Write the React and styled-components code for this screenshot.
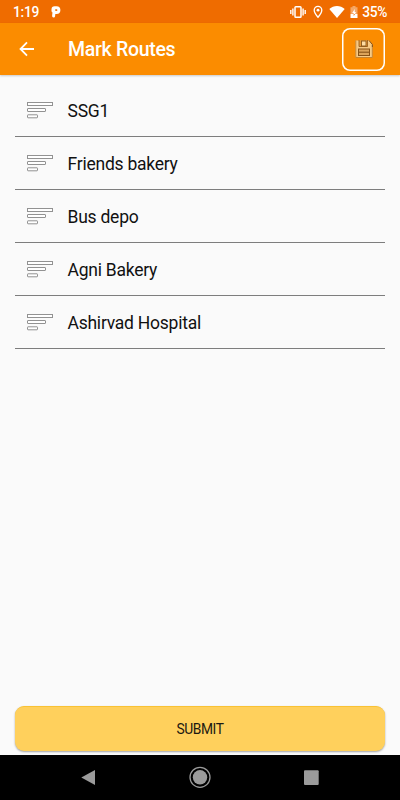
import React from 'react';
import styled, { createGlobalStyle } from 'styled-components';

const routes = [
  { id: 1, name: 'SSG1' },
  { id: 2, name: 'Friends bakery' },
  { id: 3, name: 'Bus depo' },
  { id: 4, name: 'Agni Bakery' },
  { id: 5, name: 'Ashirvad Hospital' },
];

function App() {
  return (
    <>
      <GlobalStyle />
      <Screen>
        <StatusBar>
          <Clock>1:19</Clock>
          <ParkingIcon />
          <StatusIcons>
            <VibrateIcon />
            <PinIcon />
            <WifiIcon />
            <BatteryIcon />
            <Percent>35%</Percent>
          </StatusIcons>
        </StatusBar>
        <AppBar>
          <BackButton aria-label="Back">
            <BackIcon />
          </BackButton>
          <Title>Mark Routes</Title>
          <SaveButton aria-label="Save">
            <SaveIcon />
          </SaveButton>
        </AppBar>
        <RouteList>
          {routes.map(({ id, name }) => (
            <RouteItem key={id}>
              <HandleIcon />
              <RouteName>{name}</RouteName>
            </RouteItem>
          ))}
        </RouteList>
        <Footer>
          <SubmitButton>SUBMIT</SubmitButton>
        </Footer>
        <NavBar>
          <NavIcons />
        </NavBar>
      </Screen>
    </>
  );
}

const ParkingIcon = () => (
  <svg width="12" height="14" viewBox="0 0 12 14">
    <path
      d="M3 6V4.500C3 3.100 3.600 2.700 4.600 2.700H6.500a2.300 2.300 0 0 1 0 4.800H5M4.200 5.500 3.600 11"
      fill="none"
      stroke="#fff"
      strokeWidth="3"
      strokeLinecap="round"
      strokeLinejoin="round"
    />
    <path d="M6 4.300 5.700 6" stroke="#ef8a3a" strokeWidth=".9" />
  </svg>
);

const VibrateIcon = () => (
  <svg width="16" height="14" viewBox="0 0 16 14">
    <path d="M.8 5v4M2.900 3.500v7M13.100 3.500v7M15.200 5v4" stroke="#fff" strokeWidth="1.400" />
    <rect x="5" y="1.800" width="6" height="10.400" rx=".8" fill="none" stroke="#fff" strokeWidth="1.500" />
  </svg>
);

const PinIcon = () => (
  <svg width="10" height="14" viewBox="0 0 10 14">
    <path
      d="M5 1.300a3.800 3.800 0 0 0-3.800 3.800C1.200 8 5 12.300 5 12.300s3.800-4.300 3.800-7.200A3.800 3.800 0 0 0 5 1.300z"
      fill="none"
      stroke="#fff"
      strokeWidth="1.300"
    />
    <circle cx="5" cy="5.200" r="1.400" fill="#fff" />
  </svg>
);

const WifiIcon = () => (
  <svg width="16" height="14" viewBox="0 0 16 14">
    <path d="M.3 4C2.500 2.100 5.200 1.100 8 1.100s5.500 1 7.700 2.900L8 13z" fill="#fff" />
  </svg>
);

const BatteryIcon = () => (
  <svg width="8" height="14" viewBox="0 0 8 14">
    <path d="M2.500 1h3v1.300H7.500V9h-7V2.300h2z" fill="#fff" fillOpacity=".4" />
    <path d="M.5 9h7v4h-7z" fill="#fff" />
    <path d="M4.700 4 2.200 8H3.700v1H5L6 7H4.700z" fill="#fff" />
    <path d="M3.700 9H5l-1.300 2z" fill="#ef6c00" />
  </svg>
);

const BackIcon = () => (
  <svg width="16" height="16" viewBox="0 0 16 16" fill="none" stroke="#fff" strokeWidth="1.800">
    <path d="M15 8H2M8 1.300 1.500 8 8 14.700" />
  </svg>
);

const SaveIcon = () => (
  <svg width="18" height="18" viewBox="0 0 18 18">
    <path d="M.5.500h13.500L17.500 4.500v13H.5z" fill="#f7ca85" />
    <path d="M.8.500v17H17.300V4.500" fill="none" stroke="#b97a2c" strokeWidth=".8" />
    <path d="M4 0h8.500v7H4z" fill="#e79a35" />
    <path d="M4 0v6.500h8.500V0" fill="none" stroke="#99601f" strokeWidth=".9" />
    <rect x="6.500" y="1" width="4.500" height="5" fill="#ffdda2" stroke="#87551a" strokeWidth=".9" />
    <path d="M14 .5 17.400 4.500v2.500" fill="none" stroke="#85521b" strokeWidth="1" />
    <rect x="3.500" y="9" width="11" height="6.500" fill="#dca45a" stroke="#875318" />
    <path d="M4 12.200h10" stroke="#875318" strokeWidth="1.100" />
  </svg>
);

const HandleIcon = () => (
  <svg width="27" height="18" viewBox="0 0 27 18" fill="#fff" stroke="#929292">
    <rect x=".5" y="1.500" width="25" height="3" />
    <rect x=".5" y="7.500" width="18" height="3" rx=".4" />
    <rect x=".5" y="13.800" width="10" height="3" rx=".5" />
  </svg>
);

const NavIcons = () => (
  <svg width="400" height="45" viewBox="0 0 400 45" fill="#9b9b9b">
    <path d="M81.300 22.500 95 15v15z" />
    <circle cx="200" cy="22.300" r="7.200" />
    <circle cx="200" cy="22.300" r="10" fill="none" stroke="#9b9b9b" strokeWidth="1.300" />
    <rect x="304" y="15.200" width="14.700" height="14.700" rx="1" />
  </svg>
);

const GlobalStyle = createGlobalStyle`
  * {
    box-sizing: border-box;
  }

  body {
    margin: 0;
    font-family: Roboto, sans-serif;
  }

  svg {
    display: block;
    flex-shrink: 0;
  }

  button {
    font-family: inherit;
    padding: 0;
    border: 0;
    background: none;
  }
`;

const Screen = styled.div`
  display: flex;
  flex-direction: column;
  width: 400px;
  height: 800px;
  background: #fafafa;
  overflow: hidden;
`;

const StatusBar = styled.div`
  display: flex;
  align-items: center;
  height: 23px;
  padding: 1px 13px 0;
  background: #ef6c00;
  color: #fff;
`;

const Clock = styled.span`
  width: 37px;
  font-size: 13.8px;
  font-weight: 500;
  letter-spacing: -0.25px;
`;

const StatusIcons = styled.div`
  display: flex;
  align-items: center;
  margin-left: auto;

  svg {
    margin-right: 5px;
  }

  svg:nth-child(1) {
    margin-right: 7px;
  }

  svg:nth-child(2) {
    margin-right: 6px;
  }

  svg:nth-child(4) {
    margin-right: 4px;
  }
`;

const Percent = styled.span`
  font-size: 13.8px;
  font-weight: 500;
  letter-spacing: -0.4px;
`;

const AppBar = styled.header`
  display: flex;
  align-items: center;
  height: 52px;
  padding: 0 15px 0 19px;
  background: #fb8c00;
  box-shadow: 0 1px 2px rgba(0, 0, 0, 0.2);
`;

const BackButton = styled.button`
  width: 49px;
`;

const Title = styled.h1`
  margin: 0;
  padding-top: 1px;
  color: #fff;
  font-size: 19.5px;
  font-weight: 500;
  letter-spacing: -0.3px;
`;

const SaveButton = styled.button`
  display: flex;
  align-items: center;
  justify-content: center;
  width: 43px;
  height: 43px;
  margin-left: auto;
  border-radius: 8px;
  box-shadow: inset 0 0 0 1.5px #fff;
`;

const RouteList = styled.ul`
  flex: 1;
  margin: 0;
  padding: 9px 15px 0;
  list-style: none;
`;

const RouteItem = styled.li`
  display: flex;
  align-items: center;
  height: 53px;
  padding-left: 12px;
  border-bottom: 1px solid #7d7d7d;
`;

const RouteName = styled.span`
  margin-left: 13.5px;
  padding-top: 1px;
  color: #111;
  font-size: 17.5px;
  letter-spacing: -0.24px;
`;

const Footer = styled.div`
  padding: 0 15px 4px;
`;

const SubmitButton = styled.button`
  display: block;
  width: 100%;
  height: 45px;
  border-top: 1px solid #f9c234;
  border-radius: 9px;
  background: #ffd05c;
  box-shadow: 0 1px 2px rgba(0, 0, 0, 0.35);
  color: #1d1a12;
  font-size: 13.8px;
  letter-spacing: -0.45px;
`;

const NavBar = styled.nav`
  height: 45px;
  background: #000;
`;

export default App;
